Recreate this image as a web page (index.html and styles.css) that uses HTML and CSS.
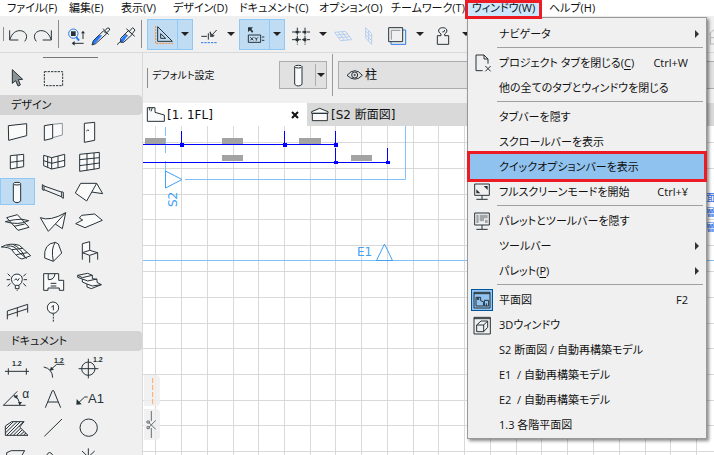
FILE: index.html
```html
<!DOCTYPE html>
<html lang="ja">
<head>
<meta charset="utf-8">
<title>平面図</title>
<link rel="stylesheet" href="styles.css">
</head>
<body>
<nav class="menubar">
  <button>ファイル(F)</button>
  <button>編集(E)</button>
  <button>表示(V)</button>
  <button>デザイン(D)</button>
  <button>ドキュメント(C)</button>
  <button>オプション(O)</button>
  <button>チームワーク(T)</button>
  <div class="open-menu">
    <button class="open-title">ウィンドウ(W)</button>
    <div class="dropdown">
      <button class="item"><span class="icon"></span><span class="label">ナビゲータ</span><span class="more"></span></button>
      <hr>
      <button class="item"><span class="icon"><svg width="22" height="22" viewBox="33 153 66 66"><path d="M68 209H48V162H72L84 174V188M72 162V174H84"/><path d="M76 195L92 211M92 195L76 211"/></svg></span><span class="label">プロジェクト タブを閉じる(<u>C</u>)</span><kbd>Ctrl+W</kbd></button>
      <button class="item"><span class="icon"></span><span class="label">他の全てのタブとウィンドウを閉じる</span></button>
      <hr>
      <button class="item"><span class="icon"></span><span class="label">タブバーを隠す</span></button>
      <button class="item"><span class="icon"></span><span class="label">スクロールバーを表示</span></button>
      <button class="item current"><span class="icon"></span><span class="label">クイックオプションバーを表示</span></button>
      <button class="item"><span class="icon"><svg width="22" height="22" viewBox="27 243 66 66"><path d="M38 252H82V286H38ZM60 286V297M43 298H77"/><path class="fill" d="M65 258H77V270ZM43 268V280H55Z"/></svg></span><span class="label">フルスクリーンモードを開始</span><kbd>Ctrl+¥</kbd></button>
      <hr>
      <button class="item"><span class="icon"><svg width="22" height="22" viewBox="27 13 66 66"><path d="M38 22H82V58H38ZM60 58V70M43 71H77"/><path class="soft" d="M43 27H50V52H43ZM53 27H77V38H66V47H53ZM69 42H77V52H69Z"/></svg></span><span class="label">パレットとツールバーを隠す</span></button>
      <button class="item"><span class="icon"></span><span class="label">ツールバー</span><span class="more"></span></button>
      <button class="item"><span class="icon"></span><span class="label">パレット(<u>P</u>)</span><span class="more"></span></button>
      <hr>
      <button class="item"><span class="icon chosen"><svg width="22" height="22" viewBox="27 247 66 66"><path d="M36 257H84V304H36ZM36 261H84M42 298V272H56V282L65 286V298H42M67 298V281H80V298H67M46 273V280M50 273V280M73 290V298"/></svg></span><span class="label">平面図</span><kbd>F2</kbd></button>
      <button class="item"><span class="icon"><svg width="22" height="22" viewBox="27 322 66 66"><path d="M36 332H85V382H36ZM36 336H85M44 355L57 343H77V362L65 375H44ZM44 355H65V375M65 355L77 343"/></svg></span><span class="label">3Dウィンドウ</span></button>
      <button class="item"><span class="icon"></span><span class="label">S2 断面図 / 自動再構築モデル</span></button>
      <button class="item"><span class="icon"></span><span class="label">E1&nbsp; / 自動再構築モデル</span></button>
      <button class="item"><span class="icon"></span><span class="label">E2&nbsp; / 自動再構築モデル</span></button>
      <button class="item"><span class="icon"></span><span class="label">1.3 各階平面図</span></button>
    </div>
  </div>
  <button>ヘルプ(H)</button>
</nav>

<div class="toolbar">
  <span class="grip"></span>
  <button aria-label="元に戻す"><svg width="25" height="34" viewBox="18 48 75 102"><path d="M29 88V117H55M30 115C36 96 48 88 62 89C80 92 85 108 74 121"/></svg></button>
  <button aria-label="やり直し"><svg width="25" height="34" viewBox="93 48 75 102"><path d="M154 88V117H128M153 115C147 96 135 88 121 89C103 92 98 108 109 121"/></svg></button>
  <span class="divider"></span>
  <button aria-label="検索と選択"><svg width="25" height="34" viewBox="192 48 75 102"><circle class="blue" cx="220" cy="98" r="14"/><path class="blue thick" d="M229 108L237 119"/><path class="fill" d="M213 91H227V105H213ZM215 127L224 120V134ZM243 97L249 89L255 97Z"/><path d="M220 127H251M249 95V114"/></svg></button>
  <button aria-label="スポイト"><svg width="25" height="34" viewBox="267 48 75 102"><path class="bluefill" d="M279 120L296 103H307L284 129H278Z"/><path d="M276 132L280 119L310 90L320 98L287 128ZM309 83L326 101M315 89L322 81Q329 79 329 87L320 95"/></svg></button>
  <button aria-label="注入"><svg width="25" height="34" viewBox="342 48 75 102"><path class="bluefill" d="M363 115L373 103H383L370 123H360Z"/><path d="M351 131L364 119M362 112L385 89L397 100L371 124H362ZM379 83L404 106M388 91L398 80L405 87L397 98M376 99L383 106"/></svg></button>
  <span class="divider"></span>
  <span class="split">
    <button aria-label="ガイド線"><svg width="29" height="30" viewBox="444 60 87 90"><path d="M473 80V124H517ZM482 101V115H497Z"/><path class="orange" d="M467 78V130H519"/></svg></button>
    <button class="arrow" aria-label="ガイド線の設定"></button>
  </span>
  <button aria-label="スナップガイド"><svg width="29" height="34" viewBox="579 48 87 102"><path d="M604 106H621M625 97V116M630 106H641M630 94L636 102L650 87M631 92V103H643"/><path class="blue dash" d="M603 125H650"/></svg></button>
  <button class="arrow" aria-label="スナップガイドの設定"></button>
  <span class="split">
    <button aria-label="トラッカー"><svg width="29" height="30" viewBox="6 60 87 90"><path class="fill" d="M30 82H45L40 87L46 95L42 98L36 91L30 96Z"/><path d="M31 105H68V127H31ZM37 112L46 121M46 112L37 121M50 112L55 117L60 112M55 117V122M72 111H79M72 121H79"/></svg></button>
    <button class="arrow" aria-label="トラッカーの設定"></button>
  </span>
  <button aria-label="グリッド"><svg width="29" height="34" viewBox="141 48 87 102"><path d="M162 93H216M162 116H216" stroke-dasharray="12 3"/><path d="M178 80V131M201 80V131" stroke-dasharray="9 3"/><path class="fill" d="M173 89H182V97H173ZM196 89H205V97H196ZM173 112H182V120H173ZM196 112H205V120H196Z"/></svg></button>
  <button class="arrow" aria-label="グリッドの設定"></button>
  <button aria-label="編集平面" disabled><svg width="28" height="34" viewBox="279 48 84 102"><path class="pale" d="M290 94L323 91L341 116L308 119ZM296 102L329 99M302 110L335 107M301 93L319 118M312 92L330 117"/></svg></button>
  <button aria-label="垂直平面" disabled><svg width="23" height="34" viewBox="363 48 69 102"><path class="pale" d="M383 80L401 98V130L383 111ZM392 89V121M383 90L401 108M383 101L401 119"/></svg></button>
  <button aria-label="表示順"><svg width="29" height="34" viewBox="432 48 87 102"><path class="blue" d="M494 87H503V130H459V122"/><path d="M452 80H494V122H452Z"/><path class="gray" d="M460 116V88H487"/></svg></button>
  <button class="arrow" aria-label="表示順の設定"></button>
  <button aria-label="スタンプ"><svg width="29" height="34" viewBox="570 48 87 102"><path d="M598 130V104H609V99C597 92 601 80 614 80C628 80 631 92 620 99V104H632V130Z"/><path d="M613 93Q620 94 620 87"/></svg></button>
  <button class="arrow" aria-label="スタンプの設定"></button>
  <span class="spacer"></span>
  <button aria-label="ホーム"><svg width="6" height="34" viewBox="0 48 18 102"><path class="pale-gray" d="M3 100L18 86M7 98V129H18M7 110H18"/></svg></button>
</div>

<div class="workspace">
  <aside class="toolbox">
    <div class="selectors">
      <span class="drag"></span>
      <button aria-label="矢印"><svg width="35" height="27" viewBox="0 194 105 81"><path class="arrowhead" d="M37 202V243L47 235L54 251L61 248L55 232L68 231Z"/></svg></button>
      <button aria-label="矩形選択"><svg width="35" height="27" viewBox="108 194 105 81"><path d="M133 208H188V250H133Z" stroke-dasharray="7 3"/></svg></button>
    </div>
    <h2>デザイン</h2>
    <div class="tools">
      <button aria-label="壁"><svg viewBox="0 69 105 81"><path class="w" d="M25 92L80 86V122L26 136Z"/></svg></button>
      <button aria-label="窓壁"><svg viewBox="108 69 105 81"><path class="w gray" d="M158 88L187 85V120L158 128"/><path class="w" d="M133 92L158 88V130L133 136Z"/></svg></button>
      <button aria-label="ドア"><svg viewBox="216 69 105 81"><path class="w" d="M253 85L284 82V136L253 142Z"/><path d="M259 108Q262 104 267 106"/></svg></button>
      <button aria-label="窓"><svg viewBox="0 159 105 81"><path class="w" d="M31 182L71 178V215L31 222ZM51 180V219M31 202L71 197"/></svg></button>
      <button aria-label="コーナー窓"><svg viewBox="108 159 105 81"><path class="w" d="M131 181L155 188L194 178V214L155 222L131 212ZM155 188V222M143 184V217M174 183V218M131 197L155 205L194 196"/></svg></button>
      <button aria-label="カーテンウォール"><svg viewBox="216 159 105 81"><path class="w" d="M239 178L298 172V220L239 229ZM261 176V226M282 174V223M239 194L298 188M239 212L298 204"/></svg></button>
      <button class="on" aria-label="柱"><svg viewBox="0 249 105 81"><path class="w" d="M40 267V318Q51 328 62 318V267"/><ellipse class="w" cx="51" cy="266" rx="11" ry="4"/></svg></button>
      <button aria-label="梁"><svg viewBox="108 249 105 81"><path d="M132 273L184 291M132 284L184 305"/><path class="w" d="M127 269V284L132 286V272ZM185 290V307L190 310V292Z"/></svg></button>
      <button aria-label="屋根"><svg viewBox="216 249 105 81"><path class="w" d="M290 265L308 296L275 291"/><path class="w" d="M242 265H290L260 318L226 294Z"/></svg></button>
      <button aria-label="シェル"><svg viewBox="0 9 105 81"><path class="w" d="M20 38L52 29L87 67L54 76Z"/><path d="M16 50Q55 62 86 47Q66 40 46 44Q30 46 16 50M42 64L74 57"/></svg></button>
      <button aria-label="メッシュ"><svg viewBox="108 9 105 81"><path class="w" d="M121 38Q150 50 197 23L187 71L166 57L145 79ZM197 23L166 57"/></svg></button>
      <button aria-label="スラブ"><svg viewBox="216 9 105 81"><path class="w" d="M245 31L284 27L307 46L255 68L227 56L248 45L238 39Z"/></svg></button>
      <button aria-label="曲面"><svg viewBox="0 99 105 81"><path class="w" d="M4 126Q30 112 58 121L92 152L66 162Q54 160 35 134Q26 126 4 126ZM20 123Q46 120 56 141L80 161M40 119Q62 128 76 158M35 134L69 130M49 149L82 143"/></svg></button>
      <button aria-label="モルフ"><svg viewBox="108 99 105 81"><path class="w" d="M134 159Q130 116 166 112L175 117L185 144L160 169Z"/><path d="M166 112Q152 130 160 169"/></svg></button>
      <button aria-label="オブジェクト"><svg viewBox="216 99 105 81"><path class="w" d="M247 143V116L269 110V136L293 143L269 151ZM247 143L269 136"/><path d="M247 143V164M269 151V173M293 143V164"/></svg></button>
      <button aria-label="ランプ"><svg viewBox="0 189 105 81"><path class="w" d="M45 241Q34 234 34 223C35 202 67 202 67 223Q67 234 57 241V251H46V241H57M43 226L48 221L53 227L58 220M50 256H53"/><path d="M31 214L23 206M70 214L78 206M30 224H20M71 224H81M31 235L23 244M70 235L78 244"/></svg></button>
      <button aria-label="ゾーン"><svg viewBox="108 189 105 81"><path class="w" d="M131 206H145Q144 217 145 224Q163 225 165 206H176V226H191V256H178V249H144V256H131Z"/><path d="M145 206H165M152 235H169M152 243H169"/></svg></button>
      <button aria-label="階段"><svg viewBox="216 189 105 81"><path class="w" d="M233 211L263 205L277 211V221L291 223V232L304 239L274 251L261 246V237L247 231V222L233 217ZM233 211L247 218L277 211M247 222L263 228L291 222M261 237L277 243L304 239"/></svg></button>
      <button aria-label="手摺り"><svg viewBox="0 279 105 81"><path d="M22 343V318L83 298V323M22 331L83 311M52 309V335"/></svg></button>
      <button aria-label="通り芯"><svg viewBox="108 279 105 81"><circle class="w" cx="159" cy="308" r="17"/><path d="M154 307L160 301V316"/><path d="M160 326V353" stroke-dasharray="6 3"/></svg></button>
    </div>
    <h2>ドキュメント</h2>
    <div class="tools documents">
      <button aria-label="寸法"><svg viewBox="0 93 105 81"><path d="M15 139H87M25 130V149M79 130V149"/><text x="36" y="124">1.2</text></svg></button>
      <button aria-label="半径寸法"><svg viewBox="108 93 105 81"><path d="M131 126Q157 131 158 158M153 133L170 118H193"/><path class="fill" d="M149 137L153 125L162 134Z"/><text x="162" y="113">1.2</text></svg></button>
      <button aria-label="高度寸法"><svg viewBox="216 93 105 81"><circle cx="265" cy="131" r="20"/><path d="M236 131H295M265 101V160"/><text x="279" y="110">1.2</text></svg></button>
      <button aria-label="角度寸法"><svg viewBox="0 183 105 81"><path d="M77 241H10L52 199M42 211Q57 218 59 240"/><path class="fill" d="M40 215L53 209L51 221ZM54 231H66L60 240Z"/><text class="alpha" x="67" y="219">α</text></svg></button>
      <button aria-label="テキスト"><svg viewBox="108 183 105 81"><path d="M136 248L157 197H161L182 248M144 231H174"/></svg></button>
      <button aria-label="ラベル"><svg viewBox="216 183 105 81"><path d="M237 232L254 216H263"/><path class="fill" d="M230 222L245 238L229 239Z"/><text class="big" x="264" y="233">A1</text></svg></button>
      <button aria-label="塗りつぶし"><svg viewBox="0 273 105 81"><path d="M16 303L35 290H72L59 306L84 331H16ZM16 314L40 290M16 324L51 290M21 330L61 290M31 330L71 290M41 330L62 309M51 330L67 314M61 330L72 320M71 330L78 324"/></svg></button>
      <button aria-label="線"><svg viewBox="108 273 105 81"><path d="M133 334L186 282"/></svg></button>
      <button aria-label="円"><svg viewBox="216 273 105 81"><circle cx="266" cy="308" r="26"/></svg></button>
      <button aria-label="ポリライン"><svg viewBox="0 363 105 81"><path d="M20 400V383L34 377H74L60 400"/></svg></button>
      <button aria-label="スプライン"><svg viewBox="108 363 105 81"><path d="M139 392Q148 374 158 390"/></svg></button>
      <button aria-label="ホットスポット"><svg viewBox="216 363 105 81"><path d="M265 370V400M246 378L265 396L284 378"/></svg></button>
    </div>
  </aside>

  <main>
    <div class="options">
      <span class="grip"></span>
      <span class="defaults">デフォルト設定</span>
      <div class="picker">
        <button aria-label="柱の設定"><svg width="35" height="26" viewBox="126 186 105 78"><path class="w" d="M170 200V253Q181 263 192 253V200"/><ellipse class="w" cx="181" cy="200" rx="11" ry="4"/></svg></button>
        <button class="arrow" aria-label="お気に入り"></button>
      </div>
      <span class="rule"></span>
      <button class="layer"><svg width="18" height="14" viewBox="323 205 54 42"><path d="M326 227Q350 199 372 227Q350 250 326 227Z"/><circle cx="349" cy="226" r="9"/><circle cx="349" cy="226" r="2"/></svg>柱</button>
    </div>
    <div class="tabs">
      <div class="tab active"><svg width="20" height="18" viewBox="19 18 60 54"><path class="w" d="M23 23H46V37L74 45V64H23ZM30 23V31M38 23L34 34"/></svg><span>[1. 1FL]</span><button class="close" aria-label="タブを閉じる"><svg width="8" height="8" viewBox="0 0 8 8"><path class="x" d="M1 1L7 7M7 1L1 7"/></svg></button></div>
      <div class="tab"><svg width="20" height="18" viewBox="31 18 60 54"><path class="w" d="M36 35L60 25L85 35V40H36ZM38 40H83V62H38Z"/></svg><span>[S2 断面図]</span></div>
    </div>
    <div class="canvas">
      <svg class="drawing" width="100%" height="100%">
        <g transform="translate(-143 -126)">
          <path class="grid" d="M155.500 126V455M181.500 126V455M207.500 126V455M233.500 126V455M258.500 126V455M284.500 126V455M310.500 126V455M335.500 126V455M361.500 126V455M387.500 126V455M413.500 126V455M438.500 126V455M464.500 126V455M490.500 126V455M516.500 126V455M541.500 126V455M567.500 126V455M593.500 126V455M619.500 126V455M645.500 126V455M670.500 126V455M696.500 126V455M143 142.500H714M143 168.500H714M143 194.500H714M143 219.500H714M143 245.500H714M143 271.500H714M143 297.500H714M143 323.500H714M143 348.500H714M143 374.500H714M143 400.500H714M143 425.500H714M143 451.500H714"/>
          <path class="dims" d="M145 138H166V144H145ZM222 138H243V144H222ZM299 138H321V144H299ZM222 155H243V161H222ZM351 155H372V161H351Z"/>
          <path class="section" d="M165.500 127V136M165.500 140V153M165.500 161V188M185 179.500H405.500V126M143 260.500H714"/>
          <path class="marker" d="M165.500 171V188L182 179.500ZM384.500 244L376.500 260.500H392.500Z"/>
          <path class="blueline" d="M143 144.500H337M143 162.500H389M181.500 131V145M284.500 131V145M335.500 131V145M335.500 148V162M387.500 148V162"/>
          <path class="bluedot" d="M180 143H184V147H180ZM283 143H287V147H283ZM334 143H338V147H334ZM334 161H338V164H334ZM386 161H390V164H386Z"/>
          <text class="mark" transform="translate(177 207) rotate(-90)">S2</text>
          <text class="mark" x="357" y="256">E1</text>
          <text class="note" x="705" y="201">面</text>
          <text class="note" x="705" y="216">層</text>
          <text class="note" x="705" y="231">層</text>
        </g>
      </svg>
      <div class="floaters">
        <button aria-label="破線"><svg width="16" height="31" viewBox="12 105 48 93"><path class="orange-light" d="M38 114V193" stroke-dasharray="15 6"/></svg></button>
        <button aria-label="切断"><svg width="16" height="31" viewBox="12 207 48 93"><path class="cut" d="M34 213V243M34 264V294M27 248L47 268M27 262L47 241M21 243H28V249H21ZM21 260H28V266H21Z"/></svg></button>
      </div>
    </div>
  </main>
</div>
</body>
</html>
```
FILE: styles.css
```css
* { box-sizing: border-box; }

body {
  display: flex;
  flex-direction: column;
  height: 100vh;
  margin: 0;
  overflow: hidden;
  background: #f0f0f0;
  color: #111;
  font: 11px/16px "Open Sans", "Noto Sans CJK JP", sans-serif;
  font-feature-settings: "palt";
}

button {
  flex: none;
  margin: 0;
  padding: 0;
  border: 0;
  background: none;
  color: inherit;
  font: inherit;
  font-feature-settings: inherit;
  white-space: nowrap;
}

svg { display: block; flex: none; }
svg path, svg circle, svg ellipse { fill: none; stroke: #263238; stroke-width: 3; }
svg .fill { fill: #263238; stroke: none; }
svg .soft { fill: #a2a6a8; stroke: none; }
svg .w { fill: #fafafa; }
svg .blue { stroke: #2979e8; }
svg .thick { stroke-width: 6; }
svg .dash { stroke-dasharray: 7 3; }
svg .bluefill { fill: #2979ff; stroke: none; }
svg .orange { stroke: #ff8a2b; stroke-dasharray: 6 3; }
svg .orange-light { stroke: #ffa860; }
svg .gray { stroke: #8c9396; }
svg .pale { stroke: #b5cff0; }
svg .pale-gray { stroke: #b8b8b8; }
svg .arrowhead { fill: #8c9396; }
svg .x { stroke: #111; stroke-width: 2; }
svg .cut { stroke: #667074; }

.menubar {
  position: relative;
  z-index: 2;
  display: grid;
  flex: none;
  grid-template-columns: 62px 52px 52px 66px 80px 72px 83px 75px auto;
  height: 16px;
  padding-left: 7px;
  background: #fff;
}
.menubar > button { height: 16px; text-align: left; }

.open-menu { position: relative; width: 77px; margin-left: -9px; }
.open-title { position: relative; z-index: 4; width: 77px; height: 16px; background: #cce8ff; }
.open-title::after {
  position: absolute;
  inset: 0 0 -3px 0;
  border: 3px solid #ed1c24;
  content: "";
}

.dropdown {
  position: absolute;
  z-index: 3;
  top: 17px;
  left: 2px;
  display: flex;
  flex-direction: column;
  width: 240px;
  padding: 3px 0 1px;
  border: 1px solid #999;
  background: #f0f0f0;
  box-shadow: 2px 2px 3px rgba(0, 0, 0, .45);
}
.item {
  position: relative;
  display: flex;
  align-items: center;
  height: 25px;
  padding-left: 3px;
  text-align: left;
}
.item .icon { display: flex; flex: none; width: 22px; height: 22px; margin-right: 6px; }
.item .chosen { background: #91c4f2; box-shadow: inset 0 0 0 1px #005499; }
.item .label { flex: 1; }
.item kbd { margin-right: 18px; font: inherit; }
.item .more {
  margin-right: 7px;
  border: solid transparent;
  border-width: 4px 0 4px 4px;
  border-left-color: #333;
}
.item u { text-underline-offset: 2px; }
.current { background: #90c2ef; }
.current::after {
  position: absolute;
  inset: -3px -1px -3px -1px;
  border: 3px solid #ed1c24;
  content: "";
}
.dropdown hr {
  width: 206px;
  height: 1px;
  margin: 1px 3px 2px auto;
  border: 0;
  background: #a0a0a0;
}

.toolbar {
  display: flex;
  flex: none;
  align-items: center;
  height: 37px;
  border-bottom: 1px solid #d9d9d9;
}
.toolbar > button { height: 36px; }
.grip { flex: none; width: 1px; height: 14px; margin: 0 2px 0 3px; background: #8c8c8c; }
.divider { flex: none; width: 1px; height: 28px; margin: 0 5px 0 2px; background: #8c8c8c; }
.split { display: flex; flex: none; width: 46px; height: 31px; border: 1px solid #90c8f6; background: #c0dcf3; }
.split .arrow { width: 15px; border-left: 1px solid #90c8f6; }
.arrow { display: grid; place-items: center; width: 17px; }
.arrow::before {
  border: solid transparent;
  border-width: 4px 4px 0;
  border-top-color: #222;
  content: "";
}
.spacer { flex: 1; }

.workspace { display: flex; flex: 1; min-height: 0; }
.toolbox { flex: none; width: 143px; overflow: hidden; border-right: 1px solid #d9d9d9; }
.selectors { display: grid; grid-template-columns: 35px 35px; gap: 4px 1px; padding-top: 4px; height: 42px; }
.drag { grid-column: 1 / 3; width: 55px; height: 1px; margin-left: 43px; background: #777; }
.toolbox h2 {
  height: 20px;
  margin: 0 0 3px;
  padding-left: 11px;
  border-radius: 0 4px 4px 0;
  background: #d4d4d4;
  font-size: 11px;
  font-weight: 400;
  line-height: 20px;
}
.tools {
  display: grid;
  grid-template-columns: repeat(3, 35px);
  grid-auto-rows: 27px;
  gap: 3px 1px;
  padding-bottom: 6px;
}
.documents { padding-top: 2px; }
.tools svg { width: 35px; height: 27px; }
.tools .on { background: #c0dcf3; box-shadow: inset 0 0 0 1px #90c8f6; }
.tools text { fill: #263238; font: 700 21px "Liberation Sans", sans-serif; }
.tools .alpha { font-size: 36px; font-weight: 400; }
.tools .big { font-size: 39px; font-weight: 400; }

main { display: flex; flex: 1; flex-direction: column; min-width: 0; }
.options { display: flex; flex: none; height: 50px; padding-top: 8px; }
.options .grip { height: 20px; margin: 7px 4px 0; }
.defaults { flex: none; width: 127px; font-size: 10px; line-height: 28px; }
.picker, .layer { height: 28px; border: 1px solid #adadad; background: #e1e1e1; }
.picker { display: flex; flex: none; width: 48px; }
.picker .arrow { width: 11px; height: 22px; margin-top: 2px; border-left: 1px solid #adadad; }
.rule { flex: none; width: 1px; height: 42px; margin: -7px 5px 0; background: #999; }
.layer { display: flex; flex: 1; gap: 1px; align-items: center; padding-left: 7px; border-right: 0; font-size: 12px; }

.tabs { display: flex; flex: none; height: 23px; background: #d9d9d9; }
.tab { display: flex; gap: 1px; align-items: center; padding: 0 4px 0 3px; font: 12px/16px "DejaVu Sans", "Noto Sans CJK JP", sans-serif; }
.active { width: 164px; background: #fff; }
.close { margin: 0 4px 0 auto; }

.canvas { position: relative; flex: 1; min-height: 0; overflow: hidden; background: #fff; }
.drawing path { stroke-width: 1; }
.drawing .grid { stroke: #d9d9d9; }
.drawing .dims { fill: #a3a3a3; stroke: none; }
.drawing .section { stroke: #82c0f8; }
.drawing .marker { stroke: #42a0f5; }
.drawing .blueline { stroke: #00f; }
.drawing .bluedot { fill: #00f; stroke: none; }
.mark { fill: #42a0f5; font: 12px "DejaVu Sans", sans-serif; }
.note { fill: #2f6fe8; font: 10px "Noto Sans CJK JP", sans-serif; }
.floaters { position: absolute; bottom: 15px; left: 1px; display: grid; gap: 3px; }
.floaters button { border-radius: 0 4px 4px 0; background: rgba(238, 238, 238, .8); }
```
